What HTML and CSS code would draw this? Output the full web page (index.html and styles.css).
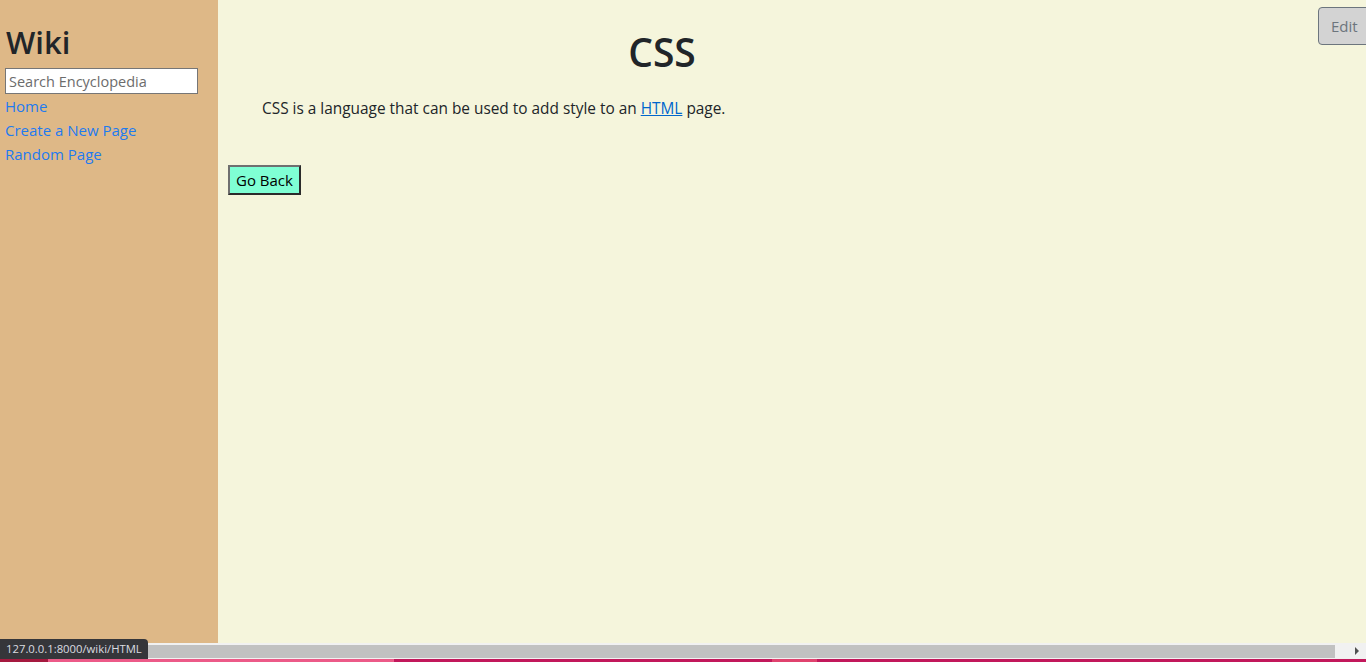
FILE: index.html
```html
<!DOCTYPE html>
<html lang="en">
<head>
<meta charset="utf-8">
<title>CSS</title>
<link rel="stylesheet" href="styles.css">
</head>
<body>
<div class="page">
  <div class="app">
    <aside class="sidebar">
      <h2 class="brand">Wiki</h2>
      <form class="search">
        <input class="search-input" type="text" placeholder="Search Encyclopedia">
      </form>
      <nav class="nav">
        <a href="#" class="nav-link">Home</a>
        <a href="#" class="nav-link">Create a New Page</a>
        <a href="#" class="nav-link">Random Page</a>
      </nav>
    </aside>
    <main class="main">
      <div class="toolbar">
        <button class="btn-edit" type="button">Edit</button>
      </div>
      <div class="article">
        <h1 class="title">CSS</h1>
        <p class="body-text">CSS is a language that can be used to add style to an <a href="#" class="inline-link">HTML</a> page.</p>
      </div>
      <div class="actions">
        <button class="btn-back" type="button">Go Back</button>
      </div>
    </main>
  </div>
  <div class="hscroll">
    <div class="hscroll-thumb"></div>
    <div class="hscroll-arrow"></div>
  </div>
  <div class="taskbar">
    <span class="tb-seg tb-dark"></span>
    <span class="tb-seg tb-pink"></span>
    <span class="tb-seg tb-red1"></span>
    <span class="tb-seg tb-light"></span>
    <span class="tb-seg tb-red2"></span>
  </div>
  <div class="status">127.0.0.1:8000/wiki/HTML</div>
</div>
</body>
</html>
```
FILE: styles.css
```css
* { box-sizing: border-box; }
html, body { margin: 0; height: 100%; overflow: hidden; }
body {
  font-family: "Open Sans", "Noto Sans", sans-serif;
  font-size: 15px;
  color: #212529;
}
.page {
  height: 662px;
  display: flex;
  flex-direction: column;
  position: relative;
}
.app {
  flex: 1;
  display: flex;
  min-height: 0;
}
.sidebar {
  width: 218px;
  flex: none;
  background: #deb887;
  padding: 22px 5px 0 5px;
}
.brand {
  margin: 0 0 6px 1px;
  font-size: 31px;
  font-weight: 600;
  line-height: 40px;
}
.search { margin: 0; }
.search-input {
  display: block;
  width: 193px;
  height: 26px;
  border: 1px solid #767676;
  padding: 1px 3px;
  font-family: inherit;
  font-size: 14.5px;
  background: #fff;
  color: #212529;
}
.search-input::placeholder { color: #6c6c6c; }
.nav { display: flex; flex-direction: column; }
.nav-link {
  color: #1e7bf0;
  text-decoration: none;
  line-height: 24px;
  font-size: 15px;
}
.main {
  flex: 1;
  background: #f5f5dc;
  position: relative;
  padding: 0 10px;
}
.toolbar {
  position: absolute;
  top: 7px;
  left: 1100px;
}
.btn-edit {
  font-family: inherit;
  font-size: 15px;
  color: #6c757d;
  background: #d3d3d3;
  border: 1px solid #6c757d;
  border-radius: 4px;
  height: 38px;
  padding: 0 12px;
  width: 70px;
  text-align: left;
}
.article { padding-top: 27px; }
.title {
  margin: 0;
  width: 868px;
  text-align: center;
  font-size: 39px;
  font-weight: 600;
  line-height: 50px;
}
.body-text {
  margin: 21px 0 0 34px;
  line-height: 22px;
  font-size: 15.4px;
}
.inline-link { color: #0066cc; text-decoration: underline; }
.actions { margin-top: 45px; }
.btn-back {
  font-family: inherit;
  font-size: 15px;
  color: #000;
  background: #7fffd4;
  border: 2px solid;
  border-color: #6f6f6f #2b2b2b #2b2b2b #6f6f6f;
  height: 30px;
  padding: 0 6px;
}
.hscroll {
  height: 15px;
  flex: none;
  background: #f1f1f1;
  display: flex;
  align-items: center;
  padding-top: 1px;
}
.hscroll-thumb {
  width: 1335px;
  height: 13px;
  background: #c1c1c1;
}
.hscroll-arrow {
  margin-left: 20px;
  width: 0;
  height: 0;
  border-top: 4px solid transparent;
  border-bottom: 4px solid transparent;
  border-left: 4px solid #505050;
}
.taskbar {
  height: 4px;
  flex: none;
  display: flex;
  border-top: 1px solid #f1f1f1;
}
.tb-seg { display: block; height: 100%; }
.tb-dark { width: 48px; background: #a5193f; }
.tb-pink { width: 346px; background: #ec5a88; }
.tb-red1 { width: 378px; background: #c2185b; }
.tb-light { width: 45px; background: #e0426e; }
.tb-red2 { flex: 1; background: #c2185b; }
.status {
  position: absolute;
  left: 0;
  bottom: 3px;
  height: 20px;
  padding: 0 6px;
  background: #35363a;
  color: #dadce0;
  font-size: 11.3px;
  line-height: 20px;
  border-top-right-radius: 4px;
  font-family: "Open Sans", sans-serif;
}
```
